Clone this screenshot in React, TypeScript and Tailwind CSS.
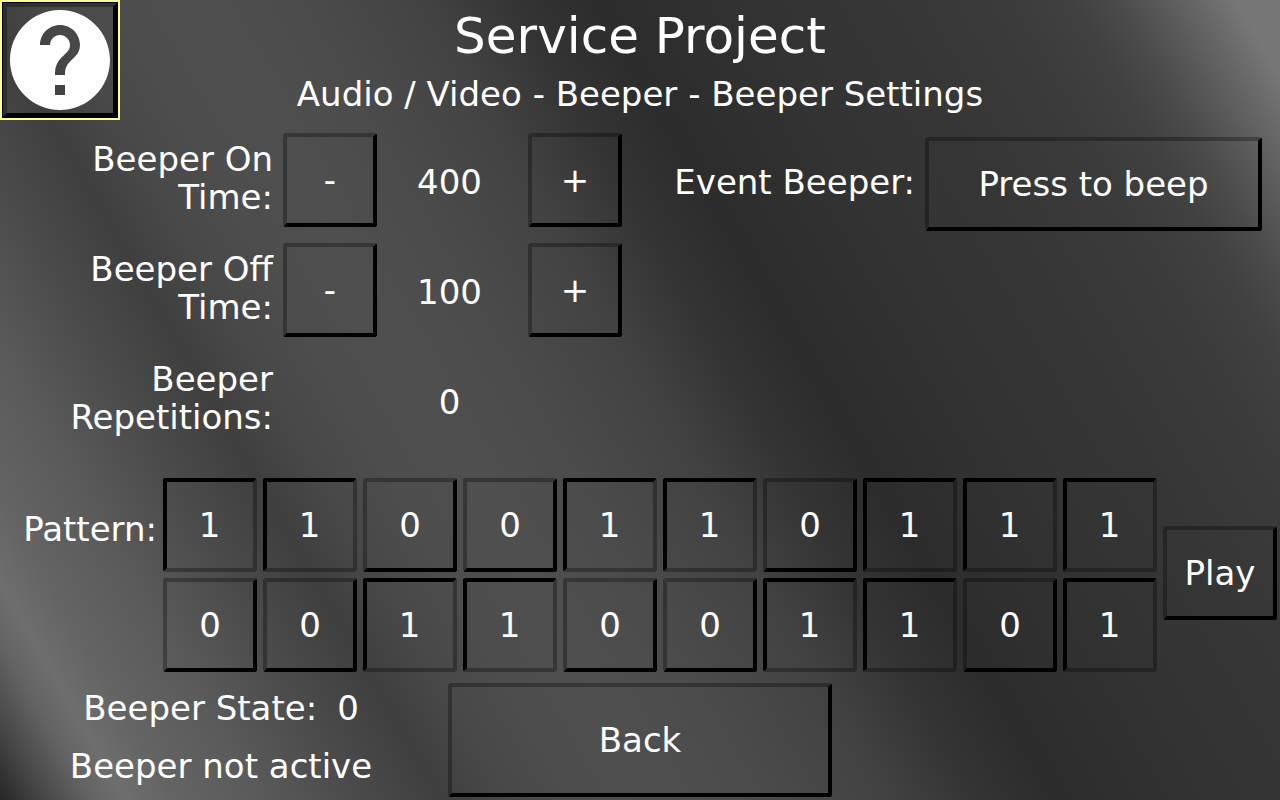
import { useState } from "react";
import type { ReactNode } from "react";
import clsx from "clsx";

const RAISED = "border-t-black/30 border-l-black/30 border-r-black border-b-black";
const PRESSED = "border-t-black border-l-black border-r-black/30 border-b-black/30 pr-px pb-px";

type PanelButtonProps = {
  children: ReactNode;
  className?: string;
  label?: string;
  pressed?: boolean;
  onClick?: () => void;
};

function PanelButton({ children, className, label, pressed, onClick }: PanelButtonProps) {
  return (
    <button
      type="button"
      aria-label={label}
      aria-pressed={pressed}
      onClick={onClick}
      className={clsx(
        "flex items-center justify-center rounded-[3px] border-4",
        pressed ? PRESSED : RAISED,
        className,
      )}
    >
      {children}
    </button>
  );
}

type SettingRowProps = {
  label: string;
  value: number;
  onChange?: (next: number) => void;
};

function SettingRow({ label, value, onChange }: SettingRowProps) {
  return (
    <div className="grid h-[94px] grid-cols-[283px_94px_151px_94px] items-center">
      <span className="pr-[10px] pb-1 pl-14 text-right">{label}</span>
      <div>
        {onChange && (
          <PanelButton label={`Decrease ${label}`} className="size-[94px]" onClick={() => onChange(value - 10)}>
            -
          </PanelButton>
        )}
      </div>
      <output className="pt-1 pr-[6px] text-center">{value}</output>
      <div>
        {onChange && (
          <PanelButton label={`Increase ${label}`} className="size-[94px]" onClick={() => onChange(value + 10)}>
            +
          </PanelButton>
        )}
      </div>
    </div>
  );
}

function HelpButton() {
  return (
    <button type="button" aria-label="Help" className="size-[120px] border-2 border-[#ffff99]">
      <span className="block size-full border border-black">
        <span className={clsx("block size-full border-4", RAISED)}>
          <svg viewBox="1.4 1.4 21.2 21.2" className="size-full fill-white" aria-hidden="true">
            <path d="M12 2C6.48 2 2 6.48 2 12s4.48 10 10 10 10-4.48 10-10S17.52 2 12 2zm1 17h-2v-2h2v2zm2.07-7.75l-.9.92C13.45 12.9 13 13.5 13 15h-2v-.5c0-1.1.45-2.1 1.17-2.83l1.24-1.26c.37-.36.59-.86.59-1.41 0-1.1-.9-2-2-2s-2 .9-2 2H8c0-2.21 1.79-4 4-4s4 1.79 4 4c0 .88-.36 1.68-.93 2.25z" />
          </svg>
        </span>
      </span>
    </button>
  );
}

const INITIAL_PATTERN = [1, 1, 0, 0, 1, 1, 0, 1, 1, 1, 0, 0, 1, 1, 0, 0, 1, 1, 0, 1];

export default function App() {
  const [onTime, setOnTime] = useState(400);
  const [offTime, setOffTime] = useState(100);
  const [pattern, setPattern] = useState(INITIAL_PATTERN);

  const toggle = (index: number) =>
    setPattern((bits) => bits.map((bit, i) => (i === index ? 1 - bit : bit)));

  return (
    <main className="min-h-screen bg-[linear-gradient(60deg,#262626_0%,#464646_2.5%,#636363_5.2%,#6e6e6e_7.2%,#646464_10%,#5a5a5a_15%,#4c4c4c_20%,#3f3f3f_25.4%,#484848_29%,#4d4d4d_33%,#4f4f4f_38%,#4b4b4b_44%,#424242_51%,#343434_56%,#2c2c2c_60.7%,#333333_70%,#363636_77%,#3b3b3b_84%,#414141_88%,#4a4a4a_90.5%,#595959_93%,#696969_95.5%,#777777_97.5%)] font-['DejaVu_Sans',sans-serif] text-[34px] leading-[38px] text-white">
      <header className="grid grid-cols-[120px_1fr_120px]">
        <HelpButton />
        <div className="pt-2 text-center">
          <h1 className="text-[50px] leading-[56px]">Service Project</h1>
          <h2 className="pt-[11px]">Audio / Video - Beeper - Beeper Settings</h2>
        </div>
      </header>

      <section className="flex justify-between pt-[13px] pr-[18px]">
        <div className="flex flex-col gap-4">
          <SettingRow label="Beeper On Time:" value={onTime} onChange={setOnTime} />
          <SettingRow label="Beeper Off Time:" value={offTime} onChange={setOffTime} />
          <SettingRow label="Beeper Repetitions:" value={0} />
        </div>
        <div className="flex h-[98px] items-center gap-[10px] pt-1">
          <span className="pb-1">Event Beeper:</span>
          <PanelButton className="h-[94px] w-[337px]">Press to beep</PanelButton>
        </div>
      </section>

      <section className="flex items-center pt-[31px] pr-[3px]">
        <span className="w-[163px] self-start pt-8 pr-[6px] text-right">Pattern:</span>
        <div className="grid flex-1 grid-cols-10 gap-[6px]">
          {pattern.map((bit, i) => (
            <PanelButton
              key={i}
              label={`Step ${i + 1}: ${bit}`}
              pressed={bit === 1}
              className="h-[94px]"
              onClick={() => toggle(i)}
            >
              {bit}
            </PanelButton>
          ))}
        </div>
        <PanelButton className="mb-1 ml-[6px] h-[94px] w-[114px]">Play</PanelButton>
      </section>

      <footer className="grid grid-cols-[1fr_384px_1fr] pt-[11px] pb-[3px]">
        <div className="flex flex-col items-center gap-5 pt-[6px] pr-[6px]">
          <p className="flex gap-5">
            <span>Beeper State:</span>
            <span>0</span>
          </p>
          <p>Beeper not active</p>
        </div>
        <PanelButton className="h-[114px]">Back</PanelButton>
      </footer>
    </main>
  );
}
